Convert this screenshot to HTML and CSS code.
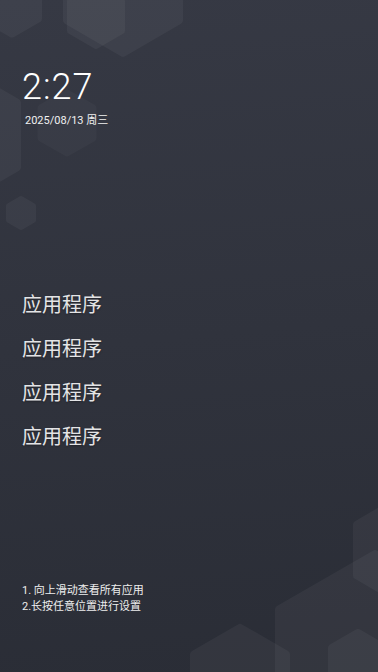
FILE: index.html
```html
<!DOCTYPE html>
<html lang="zh-CN">
<head>
<meta charset="utf-8">
<meta name="viewport" content="width=device-width, initial-scale=1">
<title>桌面</title>
<link rel="stylesheet" href="styles.css">
</head>
<body>
<div class="screen">
  <svg class="wallpaper" width="378" height="672" viewBox="0 0 378 672" aria-hidden="true">
    <g class="hex"><polygon points="12,-26.5 38,-11.5 38,18.5 12,33.5 -14,18.5 -14,-11.5"/></g>
    <g class="hex"><polygon points="96,-12.9 121,1.6 121,30.4 96,44.9 71,30.4 71,1.6"/></g>
    <g class="hex"><polygon points="123,-76.7 179,-44.3 179,20.3 123,52.7 67,20.3 67,-44.3"/></g>
    <g class="hex"><polygon points="-39,70.3 17,102.7 17,167.3 -39,199.7 -95,167.3 -95,102.7"/></g>
    <g class="hex faint"><polygon points="67,93.6 92.5,108.3 92.5,137.7 67,152.4 41.5,137.7 41.5,108.3"/></g>
    <g class="hex small"><polygon points="21,199.1 33,206 33,220 21,226.9 9,220 9,206"/></g>
    <g class="hex"><polygon points="401,499.2 445,524.6 445,575.4 401,600.8 357,575.4 357,524.6"/></g>
    <g class="hex"><polygon points="375,554.1 471,609.5 471,720.5 375,775.9 279,720.5 279,609.5"/></g>
    <g class="hex"><polygon points="240,627.9 286,654.4 286,707.6 240,734.1 194,707.6 194,654.4"/></g>
    <g class="hex"><polygon points="358,633 384,648 384,678 358,693 332,678 332,648"/></g>
  </svg>

  <div class="content">
    <div class="clock">
      <div class="time">2:27</div>
      <div class="date">2025/08/13 周三</div>
    </div>

    <ul class="apps">
      <li class="app">应用程序</li>
      <li class="app">应用程序</li>
      <li class="app">应用程序</li>
      <li class="app">应用程序</li>
    </ul>

    <div class="tips">
      <div class="tip">1. 向上滑动查看所有应用</div>
      <div class="tip">2.长按任意位置进行设置</div>
    </div>
  </div>
</div>
</body>
</html>
```

FILE: styles.css
```css
html, body {
  margin: 0;
  padding: 0;
}

body {
  width: 378px;
  height: 672px;
  overflow: hidden;
  background: #30333d;
  font-family: Roboto, "Noto Sans CJK SC", sans-serif;
}

.screen {
  position: relative;
  width: 378px;
  height: 672px;
  overflow: hidden;
  background: linear-gradient(175deg, #363944 0%, #30333d 50%, #2a2d36 100%);
}

.wallpaper {
  position: absolute;
  left: 0;
  top: 0;
  display: block;
}

.hex {
  opacity: 0.04;
}

.hex polygon {
  fill: #ffffff;
  stroke: #ffffff;
  stroke-width: 8;
  stroke-linejoin: round;
}

.hex.faint {
  opacity: 0.022;
}

.hex.small polygon {
  stroke-width: 6;
}

.content {
  position: relative;
  display: flex;
  flex-direction: column;
  padding: 66px 0 0 22px;
}

.clock {
  display: flex;
  flex-direction: column;
}

.time {
  font-family: Roboto, sans-serif;
  font-weight: 300;
  font-size: 36px;
  line-height: 42px;
  letter-spacing: 1px;
  color: #ffffff;
  height: 42px;
}

.date {
  margin-top: 6px;
  margin-left: 3px;
  font-family: Roboto, "Noto Sans CJK SC", sans-serif;
  font-size: 11px;
  line-height: 14px;
  height: 14px;
  color: #f0f0f0;
}

.apps {
  list-style: none;
  margin: 154px 0 0 0;
  padding: 0;
  display: flex;
  flex-direction: column;
}

.app {
  font-family: "Noto Sans CJK SC", sans-serif;
  font-size: 20px;
  line-height: 44px;
  height: 44px;
  color: #e4e4e6;
  text-shadow: 0 1px 2px rgba(0, 0, 0, 0.35);
}

.tips {
  margin-top: 125px;
  display: flex;
  flex-direction: column;
}

.tip {
  font-family: Roboto, "Noto Sans CJK SC", sans-serif;
  font-size: 11px;
  line-height: 16px;
  height: 16px;
  color: #eeeeee;
}
```
